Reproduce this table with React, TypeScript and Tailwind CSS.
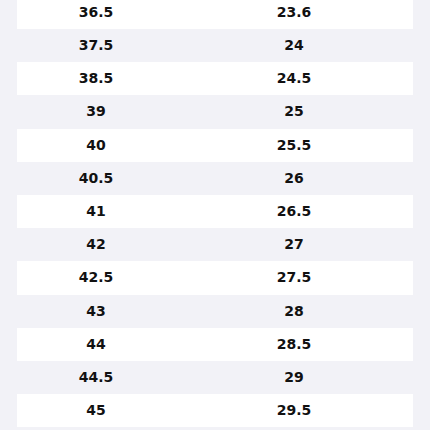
import React from 'react';

const rows: [string, string][] = [
  ['36.5', '23.6'],
  ['37.5', '24'],
  ['38.5', '24.5'],
  ['39', '25'],
  ['40', '25.5'],
  ['40.5', '26'],
  ['41', '26.5'],
  ['42', '27'],
  ['42.5', '27.5'],
  ['43', '28'],
  ['44', '28.5'],
  ['44.5', '29'],
  ['45', '29.5'],
];

export default function App() {
  return (
    <div
      className="w-[430px] h-[430px] overflow-hidden bg-[#f2f2f7] px-[17px]"
      style={{ fontFamily: '"DejaVu Sans", sans-serif' }}
    >
      <div className="-mt-[4.2px] flex flex-col">
        {rows.map(([eu, cm], i) => (
          <div
            key={eu}
            className={`flex h-[33.2px] items-center text-[14px] font-bold text-[#111] ${
              i % 2 === 0 ? 'bg-white' : 'bg-[#f2f2f7]'
            }`}
          >
            <div className="w-[158px] text-center">{eu}</div>
            <div className="flex-1 text-center">{cm}</div>
          </div>
        ))}
      </div>
    </div>
  );
}
